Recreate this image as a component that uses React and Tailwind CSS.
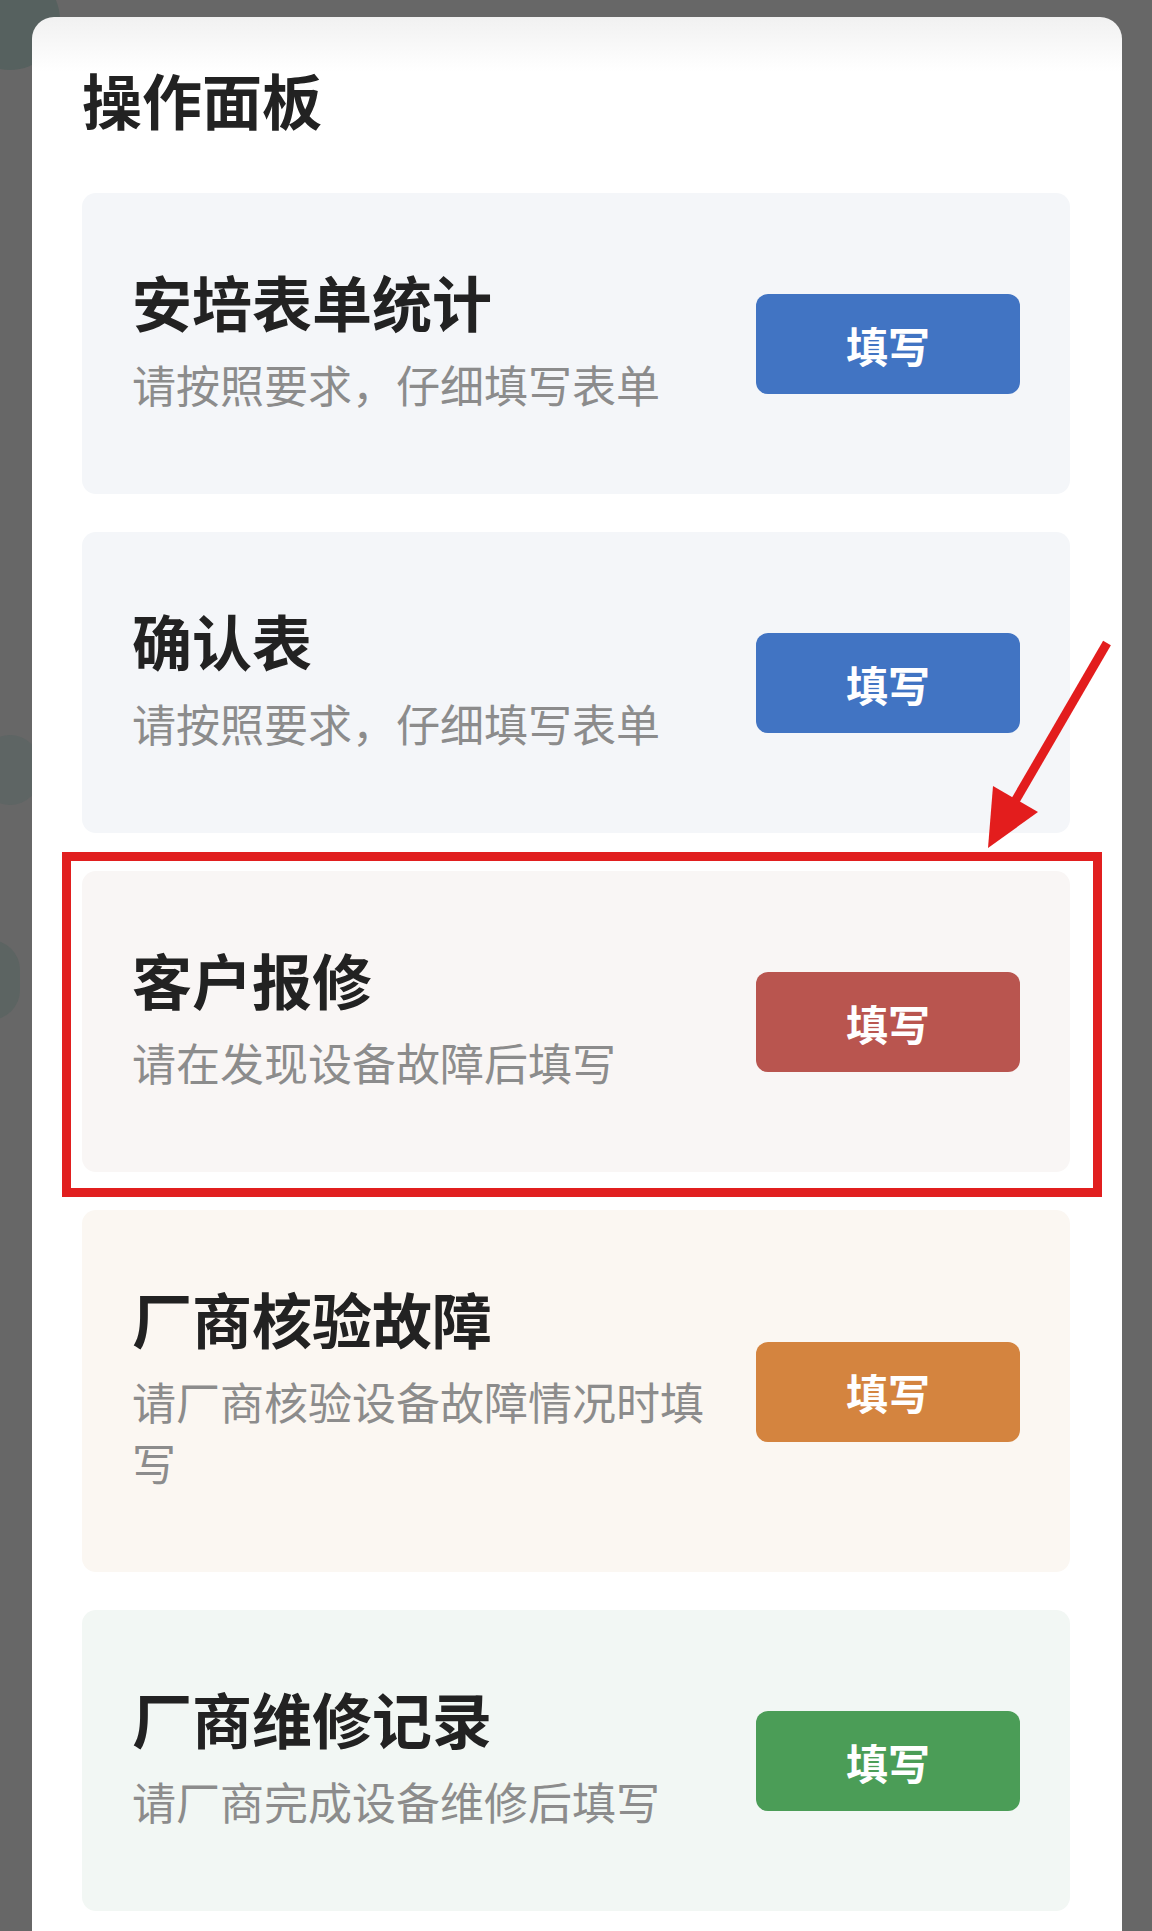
const FORMS = [
  {
    title: "安培表单统计",
    desc: "请按照要求，仔细填写表单",
    card: "bg-[#f4f6f9]",
    button: "bg-[#4174c3]",
  },
  {
    title: "确认表",
    desc: "请按照要求，仔细填写表单",
    card: "bg-[#f4f6f9]",
    button: "bg-[#4174c3]",
  },
  {
    title: "客户报修",
    desc: "请在发现设备故障后填写",
    card: "bg-[#f9f6f5]",
    button: "bg-[#b9554f]",
    highlight: true,
  },
  {
    title: "厂商核验故障",
    desc: "请厂商核验设备故障情况时填写",
    card: "bg-[#fbf7f2]",
    button: "bg-[#d4843f]",
  },
  {
    title: "厂商维修记录",
    desc: "请厂商完成设备维修后填写",
    card: "bg-[#f2f7f4]",
    button: "bg-[#4b9d57]",
  },
];

const FONT = "font-['Noto_Sans_CJK_SC','Noto_Sans',sans-serif]";

// Hand-drawn annotation arrow pointing at the highlighted card
const Arrow = () => (
  <svg
    className="absolute left-[980px] top-[635px] w-[135px] h-[220px]"
    viewBox="0 0 135 220"
  >
    <line x1="127" y1="8" x2="34" y2="168" stroke="#e31d1d" strokeWidth="9" />
    <polygon points="8,213 13,151 58,177" fill="#e31d1d" />
  </svg>
);

const FormCard = ({ form }) => (
  <div className={`relative flex items-center rounded-[14px] px-[50px] pt-[72px] pb-[79px] ${form.card}`}>
    <div className="flex-1 min-w-0 pr-[40px]">
      <p className="text-[60px] leading-[72px] font-bold text-[#222222]">{form.title}</p>
      <p className="mt-[17px] text-[44px] leading-[61px] text-[#8c8c8c]">{form.desc}</p>
    </div>
    <button
      className={`shrink-0 mt-[8px] w-[264px] h-[100px] rounded-[12px] text-white text-[42px] font-bold ${form.button}`}
    >
      填写
    </button>
    {/* red annotation frame drawn over the card */}
    {form.highlight && (
      <div className="absolute -top-[19px] -left-[20px] -right-[32px] -bottom-[25px] border-[9px] border-[#e11f1f] pointer-events-none" />
    )}
  </div>
);

export default function App() {
  return (
    <div className={`relative min-h-[1931px] bg-[#676767] px-[30px] pt-[17px] overflow-hidden ${FONT}`}>
      {/* faint watermark blobs behind the panel */}
      <div className="absolute -left-[40px] -top-[30px] w-[100px] h-[100px] rounded-full bg-[#56615f]" />
      <div className="absolute -left-[20px] top-[735px] w-[60px] h-[70px] rounded-full bg-[#5e6564]" />
      <div className="absolute -left-[40px] top-[940px] w-[60px] h-[80px] rounded-full bg-[#5c6462]" />

      <div className="relative min-h-[1914px] rounded-t-[22px] ml-[2px] pl-[50px] pr-[52px] pt-[46px] bg-[linear-gradient(to_bottom,#f1f1f1_0px,#ffffff_55px)]">
        <h1 className="text-[60px] leading-[72px] font-bold text-[#222222]">操作面板</h1>
        <div className="mt-[58px] flex flex-col gap-[38px]">
          {FORMS.map((form) => (
            <FormCard key={form.title} form={form} />
          ))}
        </div>
      </div>
      <Arrow />
    </div>
  );
}
